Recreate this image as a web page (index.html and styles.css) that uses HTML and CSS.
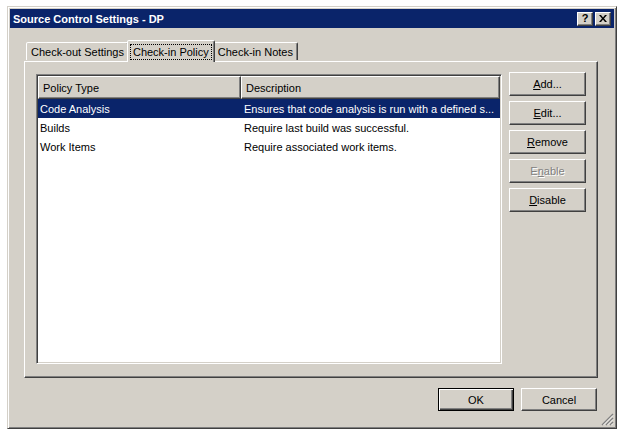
FILE: index.html
```html
<!DOCTYPE html>
<html>
<head>
<meta charset="utf-8">
<link rel="stylesheet" href="styles.css">
</head>
<body>
<div class="window">
  <div class="titlebar">
    <span class="title">Source Control Settings - DP</span>
    <div class="title-btns">
      <span class="tbtn help">?</span>
      <span class="tbtn close"><svg width="8" height="7" viewBox="0 0 8 7"><path d="M0 0h2l2 2.5L6 0h2L5 3.5 8 7H6L4 4.5 2 7H0l3-3.5z" fill="#000"/></svg></span>
    </div>
  </div>
  <div class="content">
    <div class="tabs">
      <span class="tab">Check-out Settings</span>
      <span class="tab active"><span class="focus">Check-in Policy</span></span>
      <span class="tab">Check-in Notes</span>
    </div>
    <div class="panel">
      <div class="list">
        <div class="header">
          <span class="hcell">Policy Type</span>
          <span class="hcell">Description</span>
        </div>
        <div class="row selected"><span class="c1">Code Analysis</span><span class="c2">Ensures that code analysis is run with a defined s...</span></div>
        <div class="row"><span class="c1">Builds</span><span class="c2">Require last build was successful.</span></div>
        <div class="row"><span class="c1">Work Items</span><span class="c2">Require associated work items.</span></div>
      </div>
      <div class="side">
        <span class="btn"><u>A</u>dd...</span>
        <span class="btn"><u>E</u>dit...</span>
        <span class="btn"><u>R</u>emove</span>
        <span class="btn disabled">E<u>n</u>able</span>
        <span class="btn"><u>D</u>isable</span>
      </div>
    </div>
    <div class="footer">
      <span class="btn wide default">OK</span>
      <span class="btn wide">Cancel</span>
    </div>
  </div>
  <svg class="grip" width="13" height="13" viewBox="0 0 13 13">
    <path d="M12 1L1 12M12 5L5 12M12 9L9 12" stroke="#808080" stroke-width="1.4"/>
    <path d="M12 2.5L2.5 12M12 6.5L6.5 12M12 10.5L10.5 12" stroke="#fff" stroke-width="0.8"/>
  </svg>
</div>
</body>
</html>
```

FILE: styles.css
```css
* { box-sizing: border-box; }
html, body { margin: 0; padding: 0; background: #fff; }
body {
  font-family: "Liberation Sans", Arial, sans-serif;
  font-size: 11px;
  color: #000;
}
.window {
  position: relative;
  margin: 6px 0 0 7px;
  width: 610px;
  height: 423px;
  background: #d4d0c8;
  border: 1px solid;
  border-color: #d4d0c8 #404040 #404040 #d4d0c8;
  box-shadow: inset 1px 1px #fff, inset -1px -1px #808080;
  padding: 2px;
  display: flex;
  flex-direction: column;
}
.titlebar {
  height: 19px;
  background: #0a246a;
  color: #fff;
  display: flex;
  align-items: center;
  justify-content: space-between;
  padding: 0 3px 0 3px;
}
.title { font-weight: bold; font-size: 11px; }
.title-btns { display: flex; gap: 2px; }
.tbtn {
  width: 16px;
  height: 14px;
  background: #d4d0c8;
  border: 1px solid;
  border-color: #fff #404040 #404040 #fff;
  box-shadow: inset -1px -1px #808080;
  display: flex;
  align-items: center;
  justify-content: center;
  color: #000;
  font-weight: bold;
  font-size: 11px;
  line-height: 1;
}
.content {
  flex: 1;
  display: flex;
  flex-direction: column;
  padding: 12px 16px 0 14px;
}
.tabs {
  display: flex;
  align-items: flex-end;
  height: 21px;
  padding-left: 2px;
  position: relative;
  z-index: 1;
}
.tab {
  height: 18px;
  padding: 0 4px;
  border: 1px solid;
  border-bottom: none;
  border-color: #fff #404040 transparent #fff;
  box-shadow: inset -1px 0 #808080;
  border-radius: 2px 2px 0 0;
  display: flex;
  align-items: center;
  background: #d4d0c8;
  margin-bottom: 1px;
}
.tab.active {
  height: 22px;
  margin: 0 -2px -1px;
  padding: 0 2px;
  z-index: 2;
  position: relative;
}
.focus {
  border: 1px dotted #000;
  padding: 1px 2px;
}
.panel {
  flex: 1;
  display: flex;
  gap: 7px;
  border: 1px solid;
  border-color: #fff #404040 #404040 #fff;
  box-shadow: inset -1px -1px #808080;
  padding: 11px 11px 13px 11px;
}
.list {
  flex: 1;
  margin-top: 1px;
  background: #fff;
  border: 1px solid;
  border-color: #808080 #fff #fff #808080;
  box-shadow: inset 1px 1px #404040, inset -1px -1px #d4d0c8;
  padding: 1px;
  overflow: hidden;
}
.header {
  display: grid;
  grid-template-columns: 203px 1fr;
  height: 23px;
}
.hcell {
  background: #d4d0c8;
  border: 1px solid;
  border-color: #fff #404040 #404040 #fff;
  box-shadow: inset -1px -1px #808080;
  padding: 0 4px;
  display: flex;
  align-items: center;
}
.row {
  display: grid;
  grid-template-columns: 203px 1fr;
  height: 19px;
  align-items: center;
  white-space: nowrap;
}
.row .c1 { padding-left: 2px; }
.row .c2 { padding-left: 3px; }
.row.selected { background: #0a246a; color: #fff; }
.side {
  width: 77px;
  display: flex;
  flex-direction: column;
  gap: 5px;
  margin-top: -1px;
}
.btn {
  height: 24px;
  background: #d4d0c8;
  border: 1px solid;
  border-color: #fff #404040 #404040 #fff;
  box-shadow: inset -1px -1px #808080;
  display: flex;
  align-items: center;
  justify-content: center;
}
.btn.disabled { color: #808080; text-shadow: 1px 1px #fff; }
.footer {
  display: flex;
  justify-content: flex-end;
  gap: 7px;
  padding: 10px 1px 0 0;
  height: 48px;
}
.btn.wide { width: 76px; height: 23px; }
.btn.default {
  border: 1px solid #000;
  box-shadow: inset 1px 1px #fff, inset -1px -1px #404040, inset -2px -2px #808080;
}
.grip { position: absolute; right: 2px; bottom: 2px; }
```
